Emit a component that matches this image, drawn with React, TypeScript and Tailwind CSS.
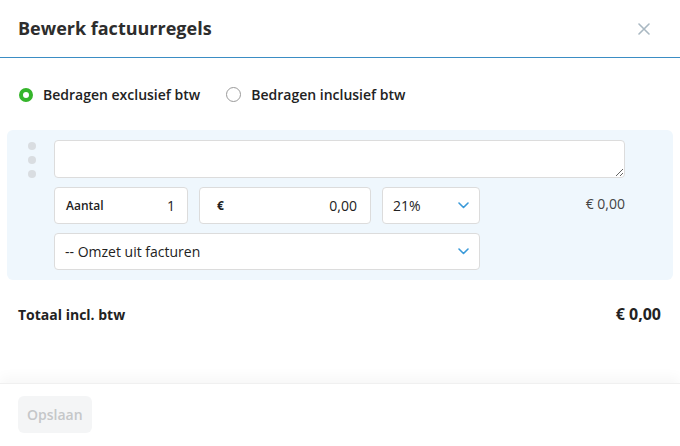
import React from 'react';

const Chevron = () => (
  <svg width="11" height="7" viewBox="0 0 11 7" fill="none" className="shrink-0">
    <path d="M1 1l4.5 4.5L10 1" stroke="#3a9ad9" strokeWidth="1.6" strokeLinecap="round" strokeLinejoin="round" />
  </svg>
);

const Radio: React.FC<{ checked?: boolean; label: string }> = ({ checked, label }) => (
  <label className="flex items-center gap-[10px] cursor-pointer">
    {checked ? (
      <span className="w-[14px] h-[14px] rounded-full border-[4px] border-[#35b52b] bg-white" />
    ) : (
      <span className="w-[15px] h-[15px] rounded-full border border-[#9a9a9a] bg-white" />
    )}
    <span className="text-[14px] font-semibold text-[#222]">{label}</span>
  </label>
);

export default function App() {
  return (
    <div
      className="w-[680px] h-[446px] bg-white flex flex-col overflow-hidden"
      style={{ fontFamily: '"Open Sans", "Liberation Sans", sans-serif' }}
    >
      {/* header */}
      <header className="h-[58px] shrink-0 flex items-center justify-between pl-[18px] pr-[30px] border-b border-[#3b8dc4]">
        <h2 className="text-[18px] font-bold text-[#2d2d2d] -mt-[1px]">Bewerk factuurregels</h2>
        <button aria-label="Sluiten" className="text-[#a9b8c2]">
          <svg width="12" height="12" viewBox="0 0 12 12">
            <path d="M1 1l10 10M11 1L1 11" stroke="currentColor" strokeWidth="1.6" strokeLinecap="round" />
          </svg>
        </button>
      </header>

      <div className="flex-1 flex flex-col">
        <div className="flex items-center gap-[26px] pl-[19px] pt-[26px] pb-[25px]">
          <Radio checked label="Bedragen exclusief btw" />
          <Radio label="Bedragen inclusief btw" />
        </div>

        {/* line item */}
        <div className="mx-[7px] rounded-[6px] bg-[#eff7fd] flex pl-[21px] pr-[48px] pt-[10px] pb-[10px]">
          <div className="w-[8px] mr-[18px] pt-[2px] flex flex-col gap-[6px]">
            <span className="w-[8px] h-[8px] rounded-full bg-[#d9dde1]" />
            <span className="w-[8px] h-[8px] rounded-full bg-[#d9dde1]" />
            <span className="w-[8px] h-[8px] rounded-full bg-[#d9dde1]" />
          </div>
          <div className="flex-1 flex flex-col gap-[9px]">
            <textarea className="h-[38px] w-full rounded-[4px] border border-[#dcdcdc] bg-white block resize-y outline-none px-[10px] py-[6px] text-[14px]" />
            <div className="flex items-start">
              <div className="w-[134px] h-[37px] rounded-[4px] border border-[#dcdcdc] bg-white flex items-center justify-between pl-[11px] pr-[12px]">
                <span className="text-[12px] font-semibold text-[#222]">Aantal</span>
                <span className="text-[14px] text-[#222]">1</span>
              </div>
              <div className="ml-[11px] w-[172px] h-[37px] rounded-[4px] border border-[#dcdcdc] bg-white flex items-center justify-between pl-[17px] pr-[13px]">
                <span className="text-[12px] font-bold text-[#222]">€</span>
                <span className="text-[14px] text-[#222]">0,00</span>
              </div>
              <div className="ml-[11px] w-[98px] h-[37px] rounded-[4px] border border-[#dcdcdc] bg-white flex items-center justify-between pl-[10px] pr-[10px]">
                <span className="text-[14px] text-[#222]">21%</span>
                <Chevron />
              </div>
              <span className="ml-auto pt-[6px] text-[14px] text-[#444]">€ 0,00</span>
            </div>
            <div className="w-[426px] h-[37px] rounded-[4px] border border-[#dcdcdc] bg-white flex items-center justify-between pl-[10px] pr-[10px]">
              <span className="text-[14px] text-[#222]">-- Omzet uit facturen</span>
              <Chevron />
            </div>
          </div>
        </div>

        <div className="flex items-center justify-between pl-[18px] pr-[19px] pt-[22px]">
          <span className="text-[14px] font-bold text-[#222]">Totaal incl. btw</span>
          <span className="text-[16px] font-bold text-[#222]">€ 0,00</span>
        </div>
      </div>

      {/* footer */}
      <footer className="h-[63px] shrink-0 bg-white shadow-[0_-6px_12px_rgba(0,0,0,0.035)] border-t border-[#f0f0f0] flex items-start pl-[18px] pt-[12px]">
        <button disabled className="h-[37px] px-[9px] rounded-[6px] bg-[#f4f5f6] text-[14px] font-semibold text-[#c5c7c9]">
          Opslaan
        </button>
      </footer>
    </div>
  );
}
